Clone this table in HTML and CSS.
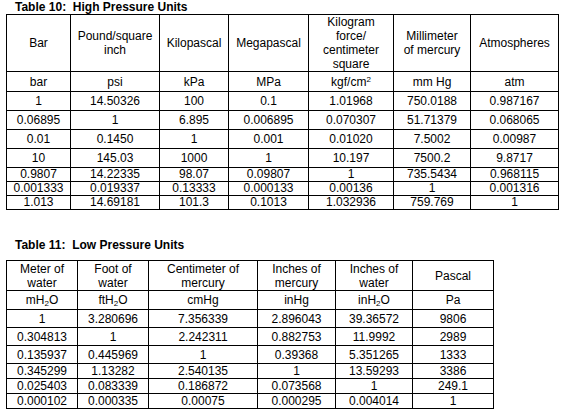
FILE: index.html
```html
<!DOCTYPE html>
<html lang="en">
<head>
    <meta charset="UTF-8">
    <meta name="viewport" content="width=device-width, initial-scale=1.0">
    <title>Pressure Unit Conversion Tables</title>
    <link rel="stylesheet" href="styles.css">
</head>
<body>
    <div class="page">
        <h2 class="table-title">Table 10:&nbsp; High Pressure Units</h2>
        <table class="units high">
            <colgroup>
                <col class="c-bar">
                <col class="c-psi">
                <col class="c-kpa">
                <col class="c-mpa">
                <col class="c-kgf">
                <col class="c-mmhg">
                <col class="c-atm">
            </colgroup>
            <tr class="head">
                <td>Bar</td>
                <td>Pound/square<br>inch</td>
                <td>Kilopascal</td>
                <td>Megapascal</td>
                <td>Kilogram<br>force/<br>centimeter<br>square</td>
                <td>Millimeter<br>of mercury</td>
                <td>Atmospheres</td>
            </tr>
            <tr class="unit">
                <td>bar</td>
                <td>psi</td>
                <td>kPa</td>
                <td>MPa</td>
                <td>kgf/cm<sup>2</sup></td>
                <td>mm Hg</td>
                <td>atm</td>
            </tr>
            <tr class="tall">
                <td>1</td><td>14.50326</td><td>100</td><td>0.1</td><td>1.01968</td><td>750.0188</td><td>0.987167</td>
            </tr>
            <tr class="tall">
                <td>0.06895</td><td>1</td><td>6.895</td><td>0.006895</td><td>0.070307</td><td>51.71379</td><td>0.068065</td>
            </tr>
            <tr class="tall">
                <td>0.01</td><td>0.1450</td><td>1</td><td>0.001</td><td>0.01020</td><td>7.5002</td><td>0.00987</td>
            </tr>
            <tr class="tall">
                <td>10</td><td>145.03</td><td>1000</td><td>1</td><td>10.197</td><td>7500.2</td><td>9.8717</td>
            </tr>
            <tr class="short">
                <td>0.9807</td><td>14.22335</td><td>98.07</td><td>0.09807</td><td>1</td><td>735.5434</td><td>0.968115</td>
            </tr>
            <tr class="short">
                <td>0.001333</td><td>0.019337</td><td>0.13333</td><td>0.000133</td><td>0.00136</td><td>1</td><td>0.001316</td>
            </tr>
            <tr class="short">
                <td>1.013</td><td>14.69181</td><td>101.3</td><td>0.1013</td><td>1.032936</td><td>759.769</td><td>1</td>
            </tr>
        </table>

        <h2 class="table-title second">Table 11:&nbsp; Low Pressure Units</h2>
        <table class="units low">
            <colgroup>
                <col class="c-mh2o">
                <col class="c-fth2o">
                <col class="c-cmhg">
                <col class="c-inhg">
                <col class="c-inh2o">
                <col class="c-pa">
            </colgroup>
            <tr class="head">
                <td>Meter of<br>water</td>
                <td>Foot of<br>water</td>
                <td>Centimeter of<br>mercury</td>
                <td>Inches of<br>mercury</td>
                <td>Inches of<br>water</td>
                <td>Pascal</td>
            </tr>
            <tr class="unit">
                <td>mH<sub>2</sub>O</td>
                <td>ftH<sub>2</sub>O</td>
                <td>cmHg</td>
                <td>inHg</td>
                <td>inH<sub>2</sub>O</td>
                <td>Pa</td>
            </tr>
            <tr class="tall">
                <td>1</td><td>3.280696</td><td>7.356339</td><td>2.896043</td><td>39.36572</td><td>9806</td>
            </tr>
            <tr class="tall">
                <td>0.304813</td><td>1</td><td>2.242311</td><td>0.882753</td><td>11.9992</td><td>2989</td>
            </tr>
            <tr class="tall">
                <td>0.135937</td><td>0.445969</td><td>1</td><td>0.39368</td><td>5.351265</td><td>1333</td>
            </tr>
            <tr class="short">
                <td>0.345299</td><td>1.13282</td><td>2.540135</td><td>1</td><td>13.59293</td><td>3386</td>
            </tr>
            <tr class="short">
                <td>0.025403</td><td>0.083339</td><td>0.186872</td><td>0.073568</td><td>1</td><td>249.1</td>
            </tr>
            <tr class="short">
                <td>0.000102</td><td>0.000335</td><td>0.00075</td><td>0.000295</td><td>0.004014</td><td>1</td>
            </tr>
        </table>
    </div>
</body>
</html>
```

FILE: styles.css
```css
body {
    margin: 0;
    background: #fff;
    color: #000;
    font-family: "Liberation Sans", Arial, sans-serif;
    font-size: 12px;
}
.page {
    padding: 0 0 0 6px;
}
.table-title {
    margin: 0 0 0 9px;
    font-size: 12px;
    font-weight: bold;
    line-height: 14px;
}
.table-title.second {
    margin-top: 28px;
    margin-bottom: 8px;
}
.units {
    border-collapse: collapse;
    table-layout: fixed;
}
.units td {
    border: 1px solid #000;
    padding: 0;
    text-align: center;
    vertical-align: middle;
    line-height: 14px;
    white-space: nowrap;
}
.units sup,
.units sub {
    font-size: 8px;
    line-height: 0;
}
.units sup {
    vertical-align: 4px;
}
.units sub {
    vertical-align: -2px;
}

/* high pressure table */
.high { width: 552px; }
.c-bar { width: 64px; }
.c-psi { width: 89px; }
.c-kpa { width: 69px; }
.c-mpa { width: 80px; }
.c-kgf { width: 85px; }
.c-mmhg { width: 77px; }
.c-atm { width: 88px; }
.high .head td { height: 56px; }
.high .unit td { height: 19px; }
.high .tall td { height: 18px; }
.high .short td { height: 13px; line-height: 13px; }

/* low pressure table */
.low { width: 487px; }
.c-mh2o { width: 71px; }
.c-fth2o { width: 71px; }
.c-cmhg { width: 109px; }
.c-inhg { width: 78px; }
.c-inh2o { width: 77px; }
.c-pa { width: 81px; }
.low .head td { height: 29px; }
.low .unit td { height: 18px; }
.low .tall td { height: 17px; }
.low .short td { height: 14px; }
```
